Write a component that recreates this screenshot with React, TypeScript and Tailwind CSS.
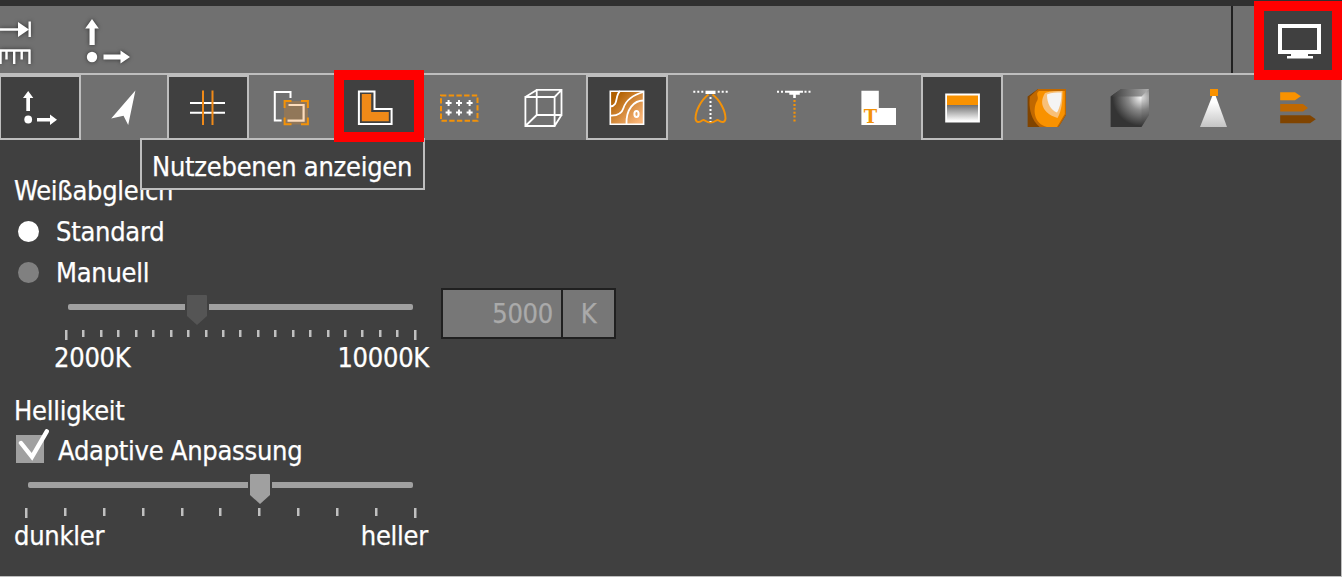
import type { ReactNode } from "react";

type ToolProps = {
  active?: boolean;
  children: ReactNode;
};

const Tool = ({ active, children }: ToolProps) => (
  <button
    className={`flex h-[65px] w-[82px] shrink-0 items-center justify-center border-2 ${
      active ? "border-[#bebebe] bg-[#404040]" : "border-transparent"
    }`}
  >
    <svg width="42" height="41" viewBox="0 0 42 41" fill="none">
      {children}
    </svg>
  </button>
);

type SliderProps = {
  before: string;
  thumb: string;
  ticks: number;
  tickRow: string;
  tickHeight: string;
  trackTop: string;
};

const Slider = ({ before, thumb, ticks, tickRow, tickHeight, trackTop }: SliderProps) => (
  <div className="flex flex-col">
    <div className="flex h-[30px] items-start">
      <div className={`h-1.5 rounded-l-xs bg-[#a0a0a0] ${trackTop} ${before}`} />
      <svg width="20" height="30" viewBox="0 0 20 30" className={`mx-0.5 shrink-0 ${thumb}`}>
        <path d="M0 1Q0 0 1 0H19Q20 0 20 1V21L10 30L0 21Z" fill="currentColor" />
      </svg>
      <div className={`h-1.5 grow rounded-r-xs bg-[#a0a0a0] ${trackTop}`} />
    </div>
    <div className={`flex justify-between ${tickRow}`}>
      {Array.from({ length: ticks }, (_, i) => (
        <div
          key={i}
          className={`w-[3px] border-r border-[#808080] bg-[#c0c0c0] ${
            i === 0 || i === ticks - 1 ? "h-2.5" : tickHeight
          }`}
        />
      ))}
    </div>
  </div>
);

const TopBar = () => (
  <div className="flex h-[73px] border-t-6 border-[#303030] bg-[#707070]">
    <svg width="140" height="67" viewBox="0 6 140 67" className="drop-shadow-[0_0_2px_#303030]">
      <path d="M0 29.5H19M29.7 21.5V37M0 50.5H30.5M0.5 50V64M6.5 50V59.5M14.2 50V64M21.7 50V59.5M29.5 50V64" stroke="#fff" strokeWidth="2.4" />
      <path d="M18 22L29 29.5L18 37Z" fill="#fff" />
      <path d="M92 19L98.8 28.5H94.7V45H89.5V28.5H85.2ZM130 57L120.5 63.5V59.6H103.5V54.5H120.5V50.5Z" fill="#fff" />
      <circle cx="92" cy="57" r="5.2" fill="#fff" />
    </svg>
    <div className="ml-auto flex w-[111px] border-l-2 border-[#202020]" />
    <div className="absolute top-px right-0 z-20 flex h-[79px] w-[88px] items-center justify-center border-10 border-[#ff0000] bg-[#404040]">
      <svg width="48" height="39" viewBox="0 0 48 39" fill="none">
        <path d="M6 5H45V31H6Z" stroke="#fff" strokeWidth="4" />
        <path d="M17 32H34V35H39V37.5H13V35H17Z" fill="#fff" />
      </svg>
    </div>
  </div>
);

const Toolbar = () => (
  <div className="relative flex h-[67px] gap-[1.8px] overflow-hidden border-t-2 border-[#bebebe] bg-[#707070] *:first:-ml-px">
    <Tool active>
      <path d="M9.2 4L14.3 11H11V24H7.3V11H4ZM38 32.7L31 38V34.5H18V30.9H31V27.5Z" fill="#fff" />
      <circle cx="9.2" cy="32.5" r="3.9" fill="#fff" />
    </Tool>
    <Tool>
      <path d="M32.4 3.5L8.2 31.6L20.5 28.7L25.2 38Z" fill="#fff" />
    </Tool>
    <Tool active>
      <path d="M3 16H38M3 25.7H38" stroke="#fff" strokeWidth="2" />
      <path d="M16 3.5V38M25.5 3.5V38" stroke="#f08a18" strokeWidth="2" />
    </Tool>
    <Tool>
      <path d="M20.5 11V5H4.8V33.6H11.6" stroke="#fff" strokeWidth="2" />
      <path d="M14 14H38V37.5H14Z" fill="#917759" />
      <path d="M18.5 18H33.6V33.6H17.5" stroke="#fcdcbc" strokeWidth="2.2" />
      <path d="M14.6 21V14H21.5M31 14H37.9V21M37.9 30.5V37.3H31M21.5 37.3H14.6V30.5" stroke="#f39208" strokeWidth="2" />
    </Tool>
    <Tool active>
      <path d="M4.9 4.5H20.5V22H37.6V37H4.9Z" stroke="#fff" strokeWidth="2" />
      <path d="M7.8 7H17.2V25H34.8V34.3H7.8Z" fill="#f08a18" />
    </Tool>
    <Tool>
      <path d="M3 8.5H39.5V33.8H3Z" stroke="#f39208" strokeWidth="2" strokeDasharray="5.4 2.3" />
      <path d="M7.6 16H13.6M10.6 13V19M18 16H24M21 13V19M28.6 16H34.6M31.6 13V19M7.6 25.6H13.6M10.6 22.6V28.6M18 25.6H24M21 22.6V28.6M28.6 25.6H34.6M31.6 22.6V28.6" stroke="#fff" strokeWidth="2" />
    </Tool>
    <Tool>
      <path d="M3.4 10H32.6V39H3.4ZM14.7 2.9H39.5V28H14.7ZM3.4 10L14.7 2.9M32.6 10L39.5 2.9M32.6 39L39.5 28M3.4 39L14.7 28" stroke="#fff" strokeWidth="1.8" />
    </Tool>
    <Tool active>
      <linearGradient id="wood" x1="0" y1="0" x2="1" y2="1">
        <stop offset="0.15" stopColor="#b06000" />
        <stop offset="0.9" stopColor="#fbb679" />
      </linearGradient>
      <path d="M4.3 4.3H37.6V37.2H4.3Z" fill="url(#wood)" stroke="#fff" strokeWidth="1.6" />
      <path d="M4 19.5C13 19 8.5 9 14 4M4 28.5C12 29 16 26 17.5 21C20 13 27 8 37.5 5M20.5 37C20 22 28 13.5 37.5 13.5" stroke="#fff" strokeWidth="1.8" />
      <ellipse cx="30.5" cy="27" rx="2.1" ry="3" stroke="#fff" strokeWidth="2" />
    </Tool>
    <Tool>
      <path d="M19.5 7.5C12 13 6.5 24 6.5 31.5C6.8 36 10.5 35.5 13.5 33.2C15.5 31.8 16.5 35.5 21.5 35.5C26.5 35.5 27.5 31.8 29.5 33.2C32.5 35.5 36.2 36 36.5 31.5C36.5 24 31 13 23.5 7.5" stroke="#f39208" strokeWidth="2" />
      <path d="M4.3 4.7H16M38.7 4.7H27" stroke="#fff" strokeWidth="2" strokeDasharray="2 2" />
      <path d="M16.5 3.7H26.5V7H16.5Z" fill="#fff" />
      <path d="M21.5 10V35" stroke="#fff" strokeWidth="2" strokeDasharray="2 2" />
    </Tool>
    <Tool>
      <path d="M4 4.7H12M31.5 4.7H39.5" stroke="#fff" strokeWidth="2" strokeDasharray="2 2" />
      <path d="M12 3.7H30V5.7H26.8V7.7H22.8V11H20.2V7.7H16.3V5.7H12Z" fill="#fff" />
      <path d="M21.5 13V36" stroke="#f39208" strokeWidth="2.2" strokeDasharray="2 1.9" />
    </Tool>
    <Tool>
      <path d="M4.4 3.7H21.8V21H39V38H4.4Z" fill="#fff" />
      <text x="13.2" y="36" textAnchor="middle" className="font-['DejaVu_Serif'] text-[18px] font-bold" fill="#f39208">T</text>
    </Tool>
    <Tool active>
      <linearGradient id="fade" x1="0" y1="0" x2="0" y2="1">
        <stop stopColor="#707070" />
        <stop offset="1" stopColor="#fff" />
      </linearGradient>
      <path d="M4.2 6.5H38.9V35.5H4.2Z" fill="#fff" />
      <path d="M6 8.5H37V18H6Z" fill="#f99200" />
      <path d="M6 18H37V34H6Z" fill="url(#fade)" />
    </Tool>
    <Tool>
      <clipPath id="cube">
        <path d="M2.6 9.5L13 2H41V28L33.5 40H2.6Z" />
      </clipPath>
      <g clipPath="url(#cube)">
        <path d="M0 0H42V41H0Z" fill="#804400" />
        <path d="M5 9.5C4 14 3 32 16 41H33.5L41 28V2H13Z" fill="#c06800" />
        <path d="M14 4H39.8V27L32 40H22C9 37 7 22 12.5 13C14 9 10 7 14 4Z" fill="#f99200" />
        <path d="M20 6C26 4 32 4 37.5 4C37.5 14 37 23 32.5 31C22 28 12 19 20 6Z" fill="#f8c078" />
        <path d="M22 7.5C27 5.5 31 5.5 36.5 5.5C36.5 14 35 20 32 25.5C26 23 22 17 22 7.5Z" fill="#f4f4f4" />
      </g>
    </Tool>
    <Tool>
      <radialGradient id="shade" cx="0.8" cy="0.22" r="0.75">
        <stop stopColor="#f8f8f8" />
        <stop offset="0.45" stopColor="#8a8a8a" />
        <stop offset="1" stopColor="#343434" />
      </radialGradient>
      <linearGradient id="lid">
        <stop stopColor="#383838" />
        <stop offset="1" stopColor="#b0b0b0" />
      </linearGradient>
      <path d="M2.6 9.5L13 2H41V28L33.5 40H2.6Z" fill="url(#shade)" />
      <path d="M2.6 9.5L13 2H41L33.5 9.5Z" fill="url(#lid)" />
      <path d="M33.5 9.5L41 2V28L33.5 40Z" fill="#404040" opacity="0.15" />
    </Tool>
    <Tool>
      <linearGradient id="beam" x1="0" y1="0" x2="0" y2="1">
        <stop offset="0.2" stopColor="#fff" />
        <stop offset="1" stopColor="#c4c4c4" />
      </linearGradient>
      <path d="M20.3 9H23.7L35 40H8Z" fill="url(#beam)" />
      <path d="M18 2H26V9H18Z" fill="#f99200" />
    </Tool>
    <Tool>
      <path d="M4.2 5.3H19L24.8 9.2L19 13.3H4.2Z" fill="#f99200" />
      <path d="M4.2 17H27L32 21L27 24.6H4.2Z" fill="#c06800" />
      <path d="M4.2 28.3H34L39.8 32.3L34 36.2H4.2Z" fill="#804400" />
    </Tool>
  </div>
);

const Settings = () => (
  <div className="flex grow flex-col pt-[30px]">
    <div className="pl-3.5 leading-[41px]">Weißabgleich</div>
    <div className="flex h-[41px] items-center gap-[17px] pl-[18px]">
      <div className="size-[21px] rounded-full bg-white" />
      <span className="pt-px">Standard</span>
    </div>
    <div className="flex h-[41px] items-center gap-[17px] pl-[18px]">
      <div className="size-[21px] rounded-full bg-[#808080]" />
      <span className="pt-px">Manuell</span>
    </div>
    <div className="flex h-[79px]">
      <div className="w-[428px] pt-0.5">
        <div className="pr-[15px] pl-[68px]">
          <Slider before="w-[117px]" thumb="text-[#555555]" ticks={21} tickRow="-ml-[3px] -mr-1 pt-[5px]" tickHeight="h-[7px]" trackTop="mt-[9px]" />
        </div>
        <div className="-mr-px flex justify-between pt-[3px] pl-[54px] leading-[30px]">
          <span>2000K</span>
          <span>10000K</span>
        </div>
      </div>
      <div className="-mt-[5px] ml-[13px] flex h-[51px] w-[175px] divide-x-2 divide-[#202020] border-2 border-[#202020] bg-[#777777] leading-[47px] text-[#aaaaaa]">
        <div className="w-[120px] pr-2 text-right">5000</div>
        <div className="grow text-center">K</div>
      </div>
    </div>
    <div className="mt-[18px] pl-3.5 leading-[41px]">Helligkeit</div>
    <div className="flex h-10 items-center pl-4">
      <svg width="34" height="34" viewBox="16 429 34 34" fill="none" className="-mt-0.5 self-start">
        <path d="M16 435H44V463H16Z" fill="#a0a0a0" />
        <path d="M21 443L32 456.8L46.8 431.3" stroke="#fff" strokeWidth="4.4" strokeLinecap="round" />
      </svg>
      <span className="ml-2">Adaptive Anpassung</span>
    </div>
    <div className="w-[428px] pt-[3px]">
      <div className="pr-[15px] pl-7">
        <Slider before="w-[220px]" thumb="text-[#a0a0a0]" ticks={11} tickRow="-ml-[3px] -mr-1 pt-1" tickHeight="h-2" trackTop="mt-2" />
      </div>
      <div className="flex justify-between pt-[3px] pl-3.5 leading-[30px]">
        <span>dunkler</span>
        <span>heller</span>
      </div>
    </div>
  </div>
);

export default function App() {
  return (
    <div className="relative flex h-[577px] w-[1342px] flex-col overflow-hidden border-b border-[#bebebe] bg-[#404040] font-['DejaVu_Sans_Condensed','DejaVu_Sans',sans-serif] text-[27px] tracking-[-0.26px] whitespace-nowrap text-white [-webkit-text-stroke:0.25px]">
      <TopBar />
      <Toolbar />
      <Settings />
      <div className="absolute top-[75px] right-0 bottom-0 w-px bg-[#bebebe]" />
      <div className="absolute top-[138px] left-[140px] z-10 h-[52px] w-[285px] border-2 border-[#bebebe] bg-[#404040] pl-2.5 leading-[53px]">
        Nutzebenen anzeigen
      </div>
      <div className="absolute top-[70px] left-[334px] z-20 h-[72px] w-[90px] border-10 border-[#ff0000]" />
    </div>
  );
}
